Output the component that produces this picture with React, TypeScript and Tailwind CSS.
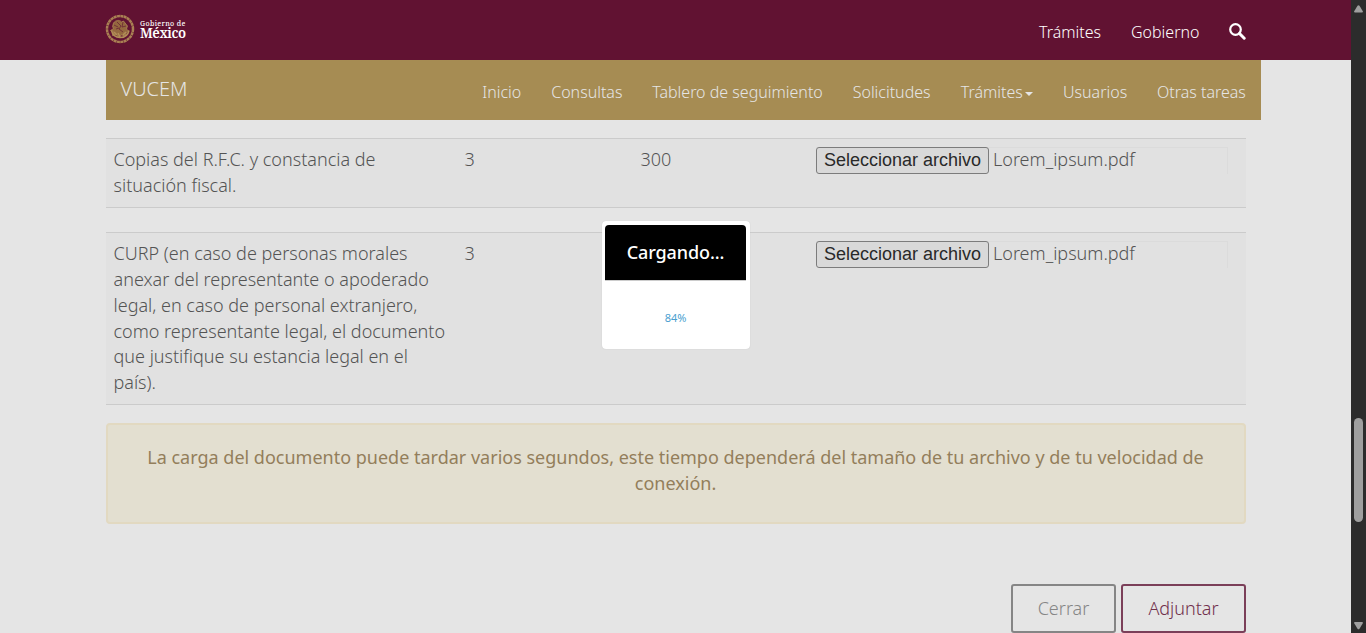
import React from "react";

const menu = [
  { label: "Inicio", width: "w-[39px]" },
  { label: "Consultas", width: "w-[71px]" },
  { label: "Tablero de seguimiento", width: "w-[170.500px]" },
  { label: "Solicitudes", width: "w-[78px]" },
  { label: "Trámites", width: "w-[72.300px]", caret: true },
  { label: "Usuarios", width: "w-[64px]" },
  { label: "Otras tareas", width: "w-[89px]" },
];

function Seal() {
  return (
    <svg viewBox="0 0 30 30" className="size-[30px]" fill="none" stroke="#b18d57">
      <circle cx="15" cy="15" r="13" strokeWidth="2.500" strokeDasharray="3 .4" opacity=".9" />
      <path d="M8.500 9c2-3 6-3.500 8-1l2-1 4 5-1 3 2 2-3 3 0 2-4-1-3 2.500-2-3-4 1 1-4-3-1 3-2-1-2z" fill="#94683f" strokeWidth=".7" />
      <path d="M6.500 16.500c1 4.500 4.500 7 8.500 7s8-2 9-7M9 18l3 3m1-2 2 4m6-5-3 3" strokeWidth="1.500" />
      <path d="m12 8 4 4-2 3 4 3M9 11l4 2m5-5-1 5 4-1m-10 3 3-1" stroke="#6b2435" strokeWidth=".8" />
    </svg>
  );
}

function FileField() {
  return (
    <div className="flex h-[27px] w-[412px] items-start border-r border-t border-[#dbdbdb] bg-[#e1e1e1]">
      <button className="-mt-px h-[27px] w-[173px] shrink-0 whitespace-nowrap rounded-[3px] border border-[#7c7c7c] bg-[#d9d9d9] pb-px font-['Liberation_Sans',sans-serif] text-[18px] font-normal leading-[24px] text-[#292929]">
        Seleccionar archivo
      </button>
      <span className="-mt-0.5 ml-1 leading-[26px]">Lorem_ipsum.pdf</span>
    </div>
  );
}

function Row({ name, max, size, height }: { name: string[]; max: string; size?: string; height: string }) {
  return (
    <div className={`grid grid-cols-[351px_176px_175.500px_438px] border-y border-[#cbcbcb] bg-[#e1e1e1] pl-[7.500px] pt-2 ${height}`}>
      <div className="whitespace-nowrap pt-[0.450px]">
        {name.map((line) => (
          <div key={line}>{line}</div>
        ))}
      </div>
      <div>{max}</div>
      <div>{size}</div>
      <FileField />
    </div>
  );
}

function Scrollbar() {
  return (
    <div className="flex h-full w-[15px] shrink-0 flex-col items-center bg-[#2c2c2c]">
      <svg viewBox="0 0 9 8" className="mt-[4.500px] h-2 w-[9px]" fill="#9f9f9f">
        <path d="M3.500.8Q4.500-.5 5.500.8L8.800 6.200Q9.300 7.500 8 7.500H1Q-.3 7.500.2 6.200Z" />
      </svg>
      <div className="mt-[405px] h-[104px] w-[9px] rounded-full bg-[#9f9f9f]" />
      <svg viewBox="0 0 9 8" className="mt-[100px] h-2 w-[9px]" fill="#9f9f9f">
        <path d="M3.500 6.700Q4.500 8 5.500 6.700L8.800 1.300Q9.300 0 8 0H1Q-.3 0 .2 1.300Z" />
      </svg>
    </div>
  );
}

export default function App() {
  return (
    <div className="relative flex h-[633px] w-[1366px] overflow-hidden bg-[#e5e5e5] font-['Noto_Sans',sans-serif] text-[18px] font-light leading-[25.700px] text-[#545454]">
      <div className="flex h-full w-[1351px] flex-col">
        <header className="flex h-[60px] shrink-0 items-start bg-[#611232] pl-[105px] text-white">
          <div className="mt-[14px] flex items-start">
            <Seal />
            <div className="ml-[5px] mt-[5px] flex flex-col font-['Noto_Serif','DejaVu_Serif','Liberation_Serif',serif]">
              <span className="whitespace-nowrap text-[7px] font-medium leading-[9px] tracking-[0.350px]">Gobierno de</span>
              <span className="text-[13.500px] font-semibold leading-[10px] tracking-[-0.450px]">México</span>
            </div>
          </div>
          <nav className="ml-auto mr-[105px] mt-[19px] flex gap-[30px] text-[16px] leading-[26px]">
            <span className="w-[62px] whitespace-nowrap">Trámites</span>
            <span className="w-[68px] whitespace-nowrap">Gobierno</span>
            <svg viewBox="0 0 17 17" className="mt-[3.500px] size-[17px]" fill="none" stroke="white">
              <circle cx="6.500" cy="6.500" r="5.300" strokeWidth="2.200" />
              <path d="m10.500 10.500 4.700 4.700" strokeWidth="3" strokeLinecap="round" />
            </svg>
          </nav>
        </header>

        <div className="ml-[106px] flex h-[60px] w-[1155px] shrink-0 items-start bg-[#a68c53] text-[#e5e5e5]">
          <span className="ml-[14.500px] mt-[15px] text-[20px] leading-[28px]">VUCEM</span>
          <nav className="ml-auto mr-[15px] mt-[19px] flex gap-[30px] text-[16px] leading-[26px]">
            {menu.map((item) => (
              <span key={item.label} className={`flex items-center whitespace-nowrap ${item.width}`}>
                {item.label}
                {item.caret && (
                  <svg viewBox="0 0 8 4" className="ml-[2px] mt-1 h-1 w-2" fill="#e5e5e5">
                    <path d="M0 0h8L4 4z" />
                  </svg>
                )}
              </span>
            ))}
          </nav>
        </div>

        <main className="ml-[106px] flex w-[1140px] flex-col pt-[18px]">
          <Row name={["Copias del R.F.C. y constancia de", "situación fiscal."]} max="3" size="300" height="h-[70px]" />
          <div className="h-6" />
          <Row
            name={[
              "CURP (en caso de personas morales",
              "anexar del representante o apoderado",
              "legal, en caso de personal extranjero,",
              "como representante legal, el documento",
              "que justifique su estancia legal en el",
              "país).",
            ]}
            max="3"
            height="h-[173px]"
          />
          <div className="mt-[18px] h-[101px] rounded-[4px] border-2 border-[#e2d9c1] bg-[#e3dfd0] pr-px pt-[20px] text-center font-normal text-[#937e5b]">
            <div className="whitespace-nowrap">
              La carga del documento puede tardar varios segundos, este tiempo dependerá del tamaño de tu archivo y de tu velocidad de
            </div>
            <div>conexión.</div>
          </div>
          <div className="mt-[60px] flex justify-end gap-[5px]">
            <button className="h-[49px] w-[105px] rounded-[3px] border-2 border-[#858585] font-light text-[#858585]">Cerrar</button>
            <button className="h-[49px] w-[125px] rounded-[3px] border-2 border-[#7b3f59] font-light text-[#71304c]">Adjuntar</button>
          </div>
        </main>
      </div>
      <Scrollbar />

      <div className="absolute left-[602px] top-[221px] flex h-[128px] w-[148px] flex-col rounded-[4px] bg-white px-[3px] pt-1 text-center shadow-[0_0_1px_#bbbbbb]">
        <div className="h-[56px] w-[141px] rounded-t-[4px] border-b border-[#cccccc] bg-black text-[18px] font-medium leading-[55px] tracking-[-0.100px] text-white">
          Cargando...
        </div>
        <div className="mt-[29px] pr-px text-[11px] font-normal leading-4 text-[#4a9fd0]">84%</div>
      </div>
    </div>
  );
}
